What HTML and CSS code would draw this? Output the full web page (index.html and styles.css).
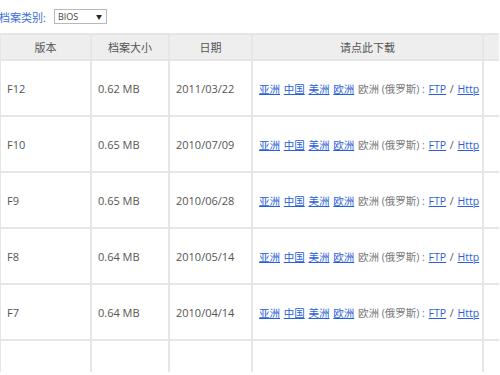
FILE: index.html
```html
<!DOCTYPE html>
<html>
<head>
  <meta charset="utf-8">
  <title>BIOS 下载</title>
  <link rel="stylesheet" href="styles.css">
</head>
<body>
  <div class="filter">
    <span class="filter-label">档案类别:</span>
    <span class="select">BIOS <span class="arrow">&#9660;</span></span>
  </div>

  <table class="files">
    <tr class="head">
      <th class="c-ver">版本</th>
      <th class="c-size">档案大小</th>
      <th class="c-date">日期</th>
      <th class="c-dl">请点此下载</th>
      <th class="c-more"></th>
    </tr>
    <tr>
      <td class="ver">F12</td><td>0.62 MB</td><td>2011/03/22</td>
      <td class="dl"><a href="#">亚洲</a> <a href="#">中国</a> <a href="#">美洲</a> <a href="#">欧洲</a> <span>欧洲 (俄罗斯) :</span> <a href="#">FTP</a> / <a href="#">Http</a></td>
      <td></td>
    </tr>
    <tr>
      <td class="ver">F10</td><td>0.65 MB</td><td>2010/07/09</td>
      <td class="dl"><a href="#">亚洲</a> <a href="#">中国</a> <a href="#">美洲</a> <a href="#">欧洲</a> <span>欧洲 (俄罗斯) :</span> <a href="#">FTP</a> / <a href="#">Http</a></td>
      <td></td>
    </tr>
    <tr>
      <td class="ver">F9</td><td>0.65 MB</td><td>2010/06/28</td>
      <td class="dl"><a href="#">亚洲</a> <a href="#">中国</a> <a href="#">美洲</a> <a href="#">欧洲</a> <span>欧洲 (俄罗斯) :</span> <a href="#">FTP</a> / <a href="#">Http</a></td>
      <td></td>
    </tr>
    <tr>
      <td class="ver">F8</td><td>0.64 MB</td><td>2010/05/14</td>
      <td class="dl"><a href="#">亚洲</a> <a href="#">中国</a> <a href="#">美洲</a> <a href="#">欧洲</a> <span>欧洲 (俄罗斯) :</span> <a href="#">FTP</a> / <a href="#">Http</a></td>
      <td></td>
    </tr>
    <tr>
      <td class="ver">F7</td><td>0.64 MB</td><td>2010/04/14</td>
      <td class="dl"><a href="#">亚洲</a> <a href="#">中国</a> <a href="#">美洲</a> <a href="#">欧洲</a> <span>欧洲 (俄罗斯) :</span> <a href="#">FTP</a> / <a href="#">Http</a></td>
      <td></td>
    </tr>
    <tr class="last">
      <td></td><td></td><td></td><td></td><td></td>
    </tr>
  </table>
</body>
</html>
```

FILE: styles.css
```css
body{
  margin: 0;
  background-color: #fff;
  font-family: "Open Sans", "Noto Sans CJK SC", sans-serif;
  font-size: 11px;
  color: #555;
  overflow: hidden;
}

.filter{
  display: flex;
  align-items: center;
  height: 33px;
  margin-left: -1px;
}

.filter-label{
  color: #3b6fd6;
  font-size: 11px;
  margin-right: 8px;
}

.select{
  display: flex;
  align-items: center;
  justify-content: space-between;
  box-sizing: border-box;
  width: 53px;
  height: 15px;
  padding: 0 4px 0 3px;
  border: 1px solid #b9b9b9;
  background-color: #fff;
  color: #444;
  font-size: 9px;
}

.arrow{
  font-size: 6px;
  color: #222;
}

.files{
  border-collapse: collapse;
  table-layout: fixed;
  width: 500px;
  margin-left: -1px;
}

.files th,
.files td{
  border: 2px solid #e6e6e6;
  padding: 0;
}

.files tr > :last-child{
  border-right: none;
}

.head th{
  height: 24px;
  background-color: #eeeeee;
  font-weight: 400;
  color: #555;
  text-align: center;
}

.c-ver{ width: 89px; }
.c-size{ width: 76px; }
.c-date{ width: 81px; }
.c-dl{ width: 229px; }

.files td{
  height: 54px;
  padding-left: 6px;
  color: #555;
}

.files tr.last td{
  height: 31px;
  border-bottom: none;
}

.files td.dl{
  padding-left: 6px;
  white-space: nowrap;
  font-size: 10.5px;
  word-spacing: 1px;
}

.dl a{
  color: #2b5fd9;
  text-decoration: underline;
}

.dl span{
  color: #777;
  word-spacing: 0;
}
```
